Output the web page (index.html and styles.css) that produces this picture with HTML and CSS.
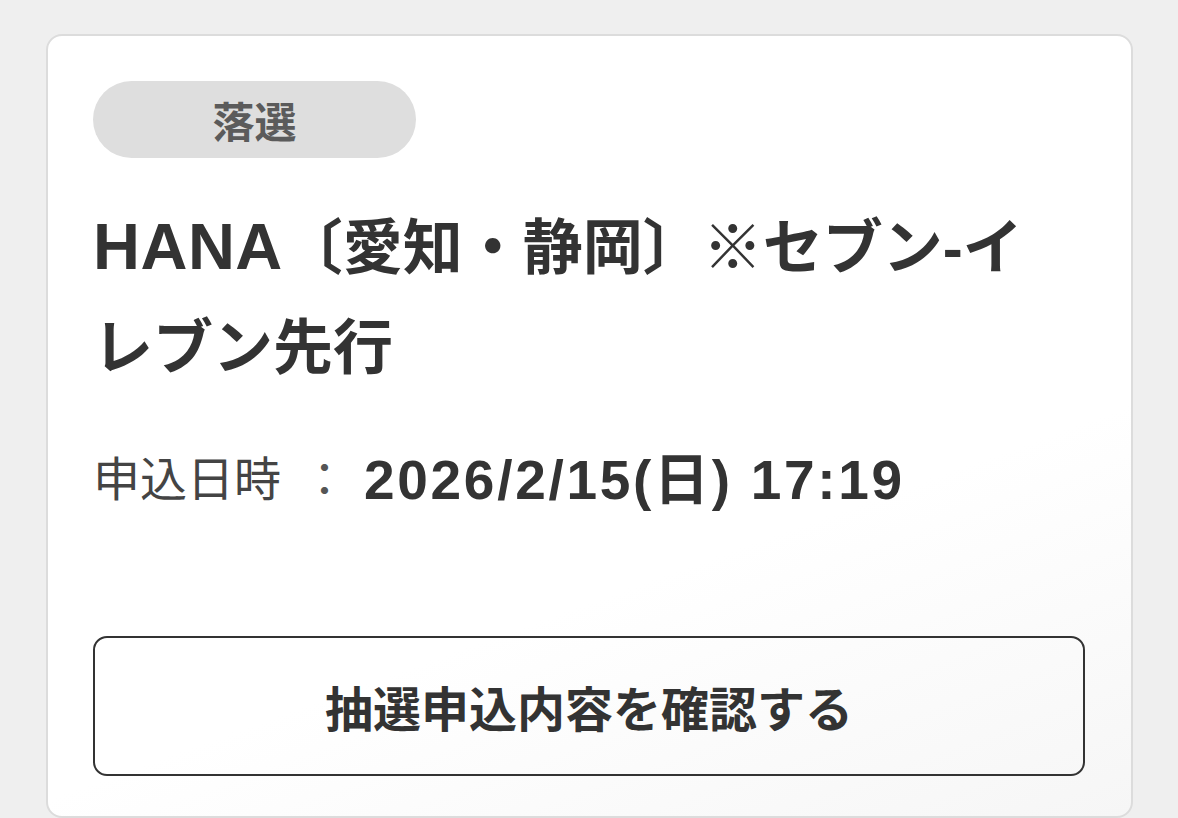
FILE: index.html
```html
<!DOCTYPE html>
<html lang="ja">
<head>
<meta charset="utf-8">
<title>抽選申込</title>
<link rel="stylesheet" href="styles.css">
</head>
<body>
<main class="page">
  <section class="card">
    <div class="status">落選</div>
    <h1 class="title"><span class="latin">HANA</span><span class="jp">〔愛知・静岡〕※セブン-イレブン先行</span></h1>
    <div class="meta">
      <span class="meta-label">申込日時</span>
      <span class="meta-sep">：</span>
      <span class="meta-value">2026/2/15(日) 17:19</span>
    </div>
    <button class="confirm" type="button">抽選申込内容を確認する</button>
  </section>
</main>
</body>
</html>
```

FILE: styles.css
```css
html, body {
  margin: 0;
  padding: 0;
}
body {
  background: #efefef;
  font-family: "Liberation Sans", "Noto Sans CJK JP", sans-serif;
  color: #333;
  height: 818px;
  overflow: hidden;
}
.page {
  padding: 34px 45px 0 46px;
}
.card {
  background: linear-gradient(160deg, #ffffff 65%, #f6f6f6 100%);
  border: 2px solid #dcdcdc;
  border-radius: 16px;
  padding: 45px 45px 40px 45px;
  display: flex;
  flex-direction: column;
  align-items: flex-start;
}
.status {
  width: 323px;
  height: 77px;
  border-radius: 39px;
  background: #dedede;
  color: #5b5b5b;
  font-family: "Noto Sans CJK JP", sans-serif;
  font-weight: 700;
  font-size: 42px;
  display: flex;
  align-items: center;
  justify-content: center;
  line-height: 1;
}
.title {
  margin: 41px 0 0 0;
  padding-right: 40px;
  font-size: 60px;
  line-height: 100px;
  font-weight: 700;
  color: #333;
}
.latin {
  font-size: 65px;
  line-height: 1;
  letter-spacing: 0.5px;
}
.meta {
  margin-top: 46px;
  display: flex;
  align-items: center;
  height: 60px;
}
.meta-label {
  font-family: "Noto Sans CJK JP", sans-serif;
  font-size: 47px;
  font-weight: 400;
  color: #444;
}
.meta-sep {
  font-family: "Noto Sans CJK JP", sans-serif;
  font-size: 47px;
  color: #555;
  margin: 0 16px 0 20px;
}
.meta-value {
  font-size: 55px;
  font-weight: 700;
  letter-spacing: 2.7px;
  color: #333;
}
.confirm {
  margin-top: 131px;
  width: 992px;
  height: 140px;
  border: 2px solid #333;
  border-radius: 14px;
  background: transparent;
  font-family: "Noto Sans CJK JP", sans-serif;
  font-size: 48px;
  font-weight: 700;
  color: #333;
  padding: 0;
}
```
